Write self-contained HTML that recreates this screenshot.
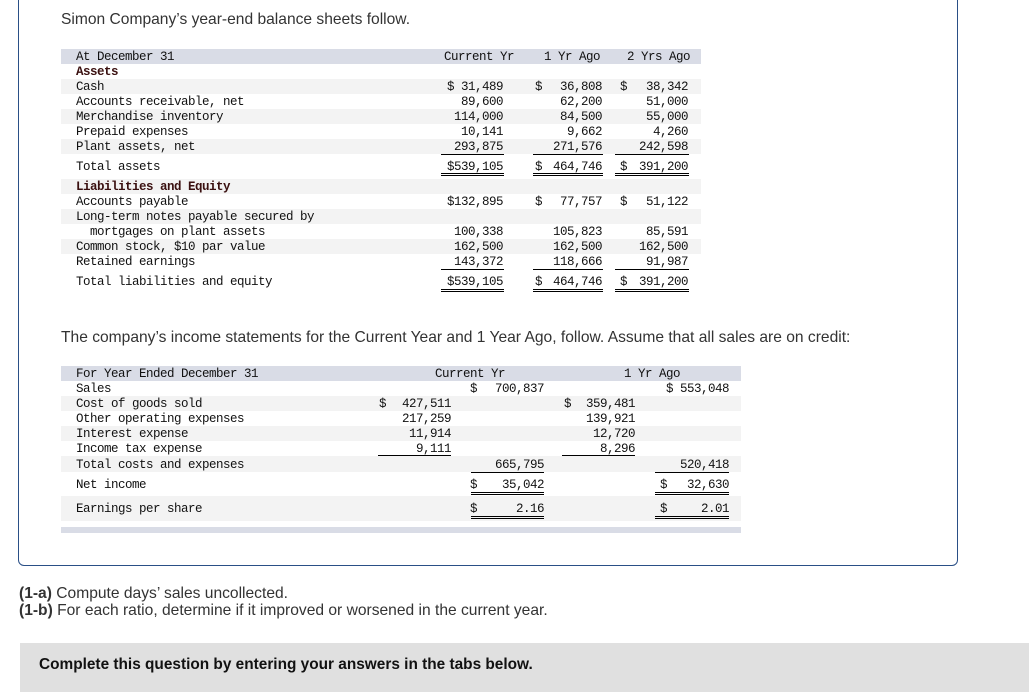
<!DOCTYPE html>
<html><head><meta charset="utf-8">
<style>
*{margin:0;padding:0;box-sizing:border-box}
body{width:1029px;height:692px;background:#fff;position:relative;overflow:hidden;font-family:"Liberation Sans",sans-serif;color:#333}
.box{position:absolute;left:18px;top:-10px;width:940px;height:576px;border:1px solid #2a4f86;border-radius:6px}
.p{position:absolute;font-size:15.6px;white-space:nowrap;color:#333}
.m{position:absolute;font-family:"Liberation Mono","DejaVu Sans Mono",monospace;font-size:12.5px;letter-spacing:-0.5px;line-height:15px;color:#111;white-space:nowrap;margin-top:1px}
.r{text-align:right;width:100px}
.bg{position:absolute;background:#f3f3f3}
.hd{position:absolute;background:#d9dce6}
.l{position:absolute;height:1px;background:#000}
.b{font-weight:bold;color:#3a1010}
</style></head><body>
<div class="box"></div>
<div class="p" style="left:61px;top:11px">Simon Company’s year-end balance sheets follow.</div>

<div class="hd" style="left:61px;top:49px;width:640px;height:15px"></div>
<div class="bg" style="left:61px;top:79px;width:640px;height:15px"></div>
<div class="bg" style="left:61px;top:109px;width:640px;height:15px"></div>
<div class="bg" style="left:61px;top:139px;width:640px;height:15px"></div>
<div class="bg" style="left:61px;top:179px;width:640px;height:15px"></div>
<div class="bg" style="left:61px;top:209px;width:640px;height:15px"></div>
<div class="bg" style="left:61px;top:239px;width:640px;height:15px"></div>

<div class="m" style="left:76px;top:49px">At December 31</div>
<div class="m r" style="left:414px;top:49px">Current Yr</div>
<div class="m r" style="left:500px;top:49px">1 Yr Ago</div>
<div class="m r" style="left:590px;top:49px">2 Yrs Ago</div>

<div class="m b" style="left:76px;top:64px">Assets</div>
<div class="m" style="left:76px;top:79px">Cash</div>
<div class="m" style="left:76px;top:94px">Accounts receivable, net</div>
<div class="m" style="left:76px;top:109px">Merchandise inventory</div>
<div class="m" style="left:76px;top:124px">Prepaid expenses</div>
<div class="m" style="left:76px;top:139px">Plant assets, net</div>
<div class="m" style="left:76px;top:159px">Total assets</div>
<div class="m b" style="left:76px;top:179px">Liabilities and Equity</div>
<div class="m" style="left:76px;top:194px">Accounts payable</div>
<div class="m" style="left:76px;top:209px">Long-term notes payable secured by</div>
<div class="m" style="left:90px;top:224px">mortgages on plant assets</div>
<div class="m" style="left:76px;top:239px">Common stock, $10 par value</div>
<div class="m" style="left:76px;top:254px">Retained earnings</div>
<div class="m" style="left:76px;top:274px">Total liabilities and equity</div>

<div class="m r" style="left:403px;top:79px">$ 31,489</div>
<div class="m r" style="left:403px;top:94px">89,600</div>
<div class="m r" style="left:403px;top:109px">114,000</div>
<div class="m r" style="left:403px;top:124px">10,141</div>
<div class="m r" style="left:403px;top:139px">293,875</div>
<div class="m r" style="left:403px;top:159px">$539,105</div>
<div class="m r" style="left:403px;top:194px">$132,895</div>
<div class="m r" style="left:403px;top:224px">100,338</div>
<div class="m r" style="left:403px;top:239px">162,500</div>
<div class="m r" style="left:403px;top:254px">143,372</div>
<div class="m r" style="left:403px;top:274px">$539,105</div>

<div class="m" style="left:535px;top:79px">$</div>
<div class="m" style="left:535px;top:159px">$</div>
<div class="m" style="left:535px;top:194px">$</div>
<div class="m" style="left:535px;top:274px">$</div>
<div class="m r" style="left:502px;top:79px">36,808</div>
<div class="m r" style="left:502px;top:94px">62,200</div>
<div class="m r" style="left:502px;top:109px">84,500</div>
<div class="m r" style="left:502px;top:124px">9,662</div>
<div class="m r" style="left:502px;top:139px">271,576</div>
<div class="m r" style="left:502px;top:159px">464,746</div>
<div class="m r" style="left:502px;top:194px">77,757</div>
<div class="m r" style="left:502px;top:224px">105,823</div>
<div class="m r" style="left:502px;top:239px">162,500</div>
<div class="m r" style="left:502px;top:254px">118,666</div>
<div class="m r" style="left:502px;top:274px">464,746</div>

<div class="m" style="left:620px;top:79px">$</div>
<div class="m" style="left:620px;top:159px">$</div>
<div class="m" style="left:620px;top:194px">$</div>
<div class="m" style="left:620px;top:274px">$</div>
<div class="m r" style="left:588px;top:79px">38,342</div>
<div class="m r" style="left:588px;top:94px">51,000</div>
<div class="m r" style="left:588px;top:109px">55,000</div>
<div class="m r" style="left:588px;top:124px">4,260</div>
<div class="m r" style="left:588px;top:139px">242,598</div>
<div class="m r" style="left:588px;top:159px">391,200</div>
<div class="m r" style="left:588px;top:194px">51,122</div>
<div class="m r" style="left:588px;top:224px">85,591</div>
<div class="m r" style="left:588px;top:239px">162,500</div>
<div class="m r" style="left:588px;top:254px">91,987</div>
<div class="m r" style="left:588px;top:274px">391,200</div>

<div class="l" style="left:441px;top:154px;width:63px"></div>
<div class="l" style="left:533px;top:154px;width:70px"></div>
<div class="l" style="left:615px;top:154px;width:74px"></div>
<div class="l" style="left:441px;top:173px;width:63px"></div><div class="l" style="left:441px;top:175px;width:63px"></div>
<div class="l" style="left:533px;top:173px;width:70px"></div><div class="l" style="left:533px;top:175px;width:70px"></div>
<div class="l" style="left:615px;top:173px;width:74px"></div><div class="l" style="left:615px;top:175px;width:74px"></div>
<div class="l" style="left:441px;top:269px;width:63px"></div>
<div class="l" style="left:533px;top:269px;width:70px"></div>
<div class="l" style="left:615px;top:269px;width:74px"></div>
<div class="l" style="left:441px;top:289px;width:63px"></div><div class="l" style="left:441px;top:291px;width:63px"></div>
<div class="l" style="left:533px;top:289px;width:70px"></div><div class="l" style="left:533px;top:291px;width:70px"></div>
<div class="l" style="left:615px;top:289px;width:74px"></div><div class="l" style="left:615px;top:291px;width:74px"></div>

<div class="p" style="left:61px;top:329px">The company’s income statements for the Current Year and 1 Year Ago, follow. Assume that all sales are on credit:</div>

<div class="hd" style="left:61px;top:366px;width:680px;height:15px"></div>
<div class="bg" style="left:61px;top:396px;width:680px;height:15px"></div>
<div class="bg" style="left:61px;top:426px;width:680px;height:15px"></div>
<div class="bg" style="left:61px;top:456px;width:680px;height:16px"></div>
<div class="bg" style="left:61px;top:496px;width:680px;height:25px"></div>
<div class="hd" style="left:61px;top:527px;width:680px;height:6px"></div>

<div class="m" style="left:76px;top:366px">For Year Ended December 31</div>
<div class="m" style="left:435px;top:366px">Current Yr</div>
<div class="m" style="left:624px;top:366px">1 Yr Ago</div>
<div class="m" style="left:76px;top:381px">Sales</div>
<div class="m" style="left:76px;top:396px">Cost of goods sold</div>
<div class="m" style="left:76px;top:411px">Other operating expenses</div>
<div class="m" style="left:76px;top:426px">Interest expense</div>
<div class="m" style="left:76px;top:441px">Income tax expense</div>
<div class="m" style="left:76px;top:457px">Total costs and expenses</div>
<div class="m" style="left:76px;top:477px">Net income</div>
<div class="m" style="left:76px;top:501px">Earnings per share</div>

<div class="m" style="left:379px;top:396px">$</div>
<div class="m r" style="left:351px;top:396px">427,511</div>
<div class="m r" style="left:351px;top:411px">217,259</div>
<div class="m r" style="left:351px;top:426px">11,914</div>
<div class="m r" style="left:351px;top:441px">9,111</div>

<div class="m" style="left:470px;top:381px">$</div>
<div class="m" style="left:470px;top:477px">$</div>
<div class="m" style="left:470px;top:501px">$</div>
<div class="m r" style="left:444px;top:381px">700,837</div>
<div class="m r" style="left:444px;top:457px">665,795</div>
<div class="m r" style="left:444px;top:477px">35,042</div>
<div class="m r" style="left:444px;top:501px">2.16</div>

<div class="m" style="left:564px;top:396px">$</div>
<div class="m r" style="left:535px;top:396px">359,481</div>
<div class="m r" style="left:535px;top:411px">139,921</div>
<div class="m r" style="left:535px;top:426px">12,720</div>
<div class="m r" style="left:535px;top:441px">8,296</div>

<div class="m r" style="left:629px;top:381px">$ 553,048</div>
<div class="m" style="left:660px;top:477px">$</div>
<div class="m" style="left:660px;top:501px">$</div>
<div class="m r" style="left:629px;top:457px">520,418</div>
<div class="m r" style="left:629px;top:477px">32,630</div>
<div class="m r" style="left:629px;top:501px">2.01</div>

<div class="l" style="left:378px;top:455px;width:73px"></div>
<div class="l" style="left:562px;top:455px;width:73px"></div>
<div class="l" style="left:471px;top:472px;width:73px"></div>
<div class="l" style="left:655px;top:472px;width:74px"></div>
<div class="l" style="left:471px;top:492px;width:73px"></div><div class="l" style="left:471px;top:494px;width:73px"></div>
<div class="l" style="left:655px;top:492px;width:74px"></div><div class="l" style="left:655px;top:494px;width:74px"></div>
<div class="l" style="left:471px;top:516px;width:73px"></div><div class="l" style="left:471px;top:518px;width:73px"></div>
<div class="l" style="left:655px;top:516px;width:74px"></div><div class="l" style="left:655px;top:518px;width:74px"></div>

<div class="p" style="left:19px;top:585px"><b>(1-a)</b> Compute days’ sales uncollected.</div>
<div class="p" style="left:19px;top:602px"><b>(1-b)</b> For each ratio, determine if it improved or worsened in the current year.</div>

<div style="position:absolute;left:20px;top:643px;width:1009px;height:49px;background:#e0e0e0"></div>
<div class="p" style="left:39px;top:656px;font-size:15.4px;font-weight:bold;color:#111">Complete this question by entering your answers in the tabs below.</div>
</body></html>
